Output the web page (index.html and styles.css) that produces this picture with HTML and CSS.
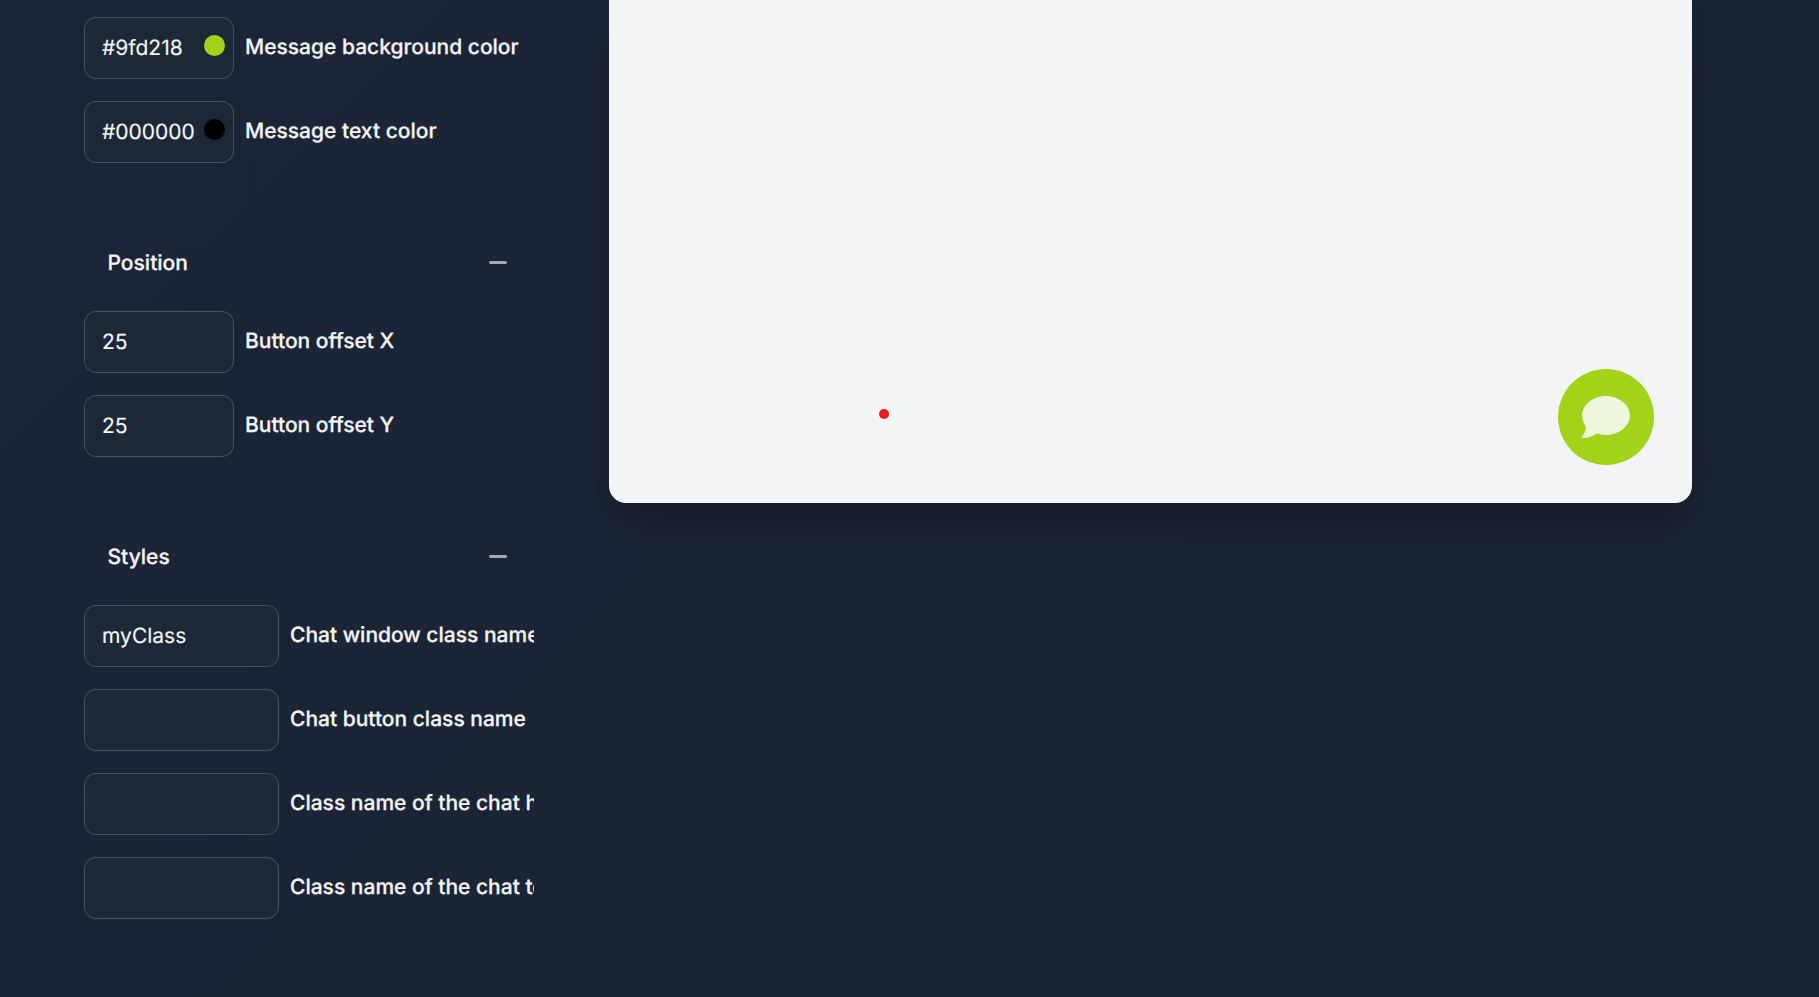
FILE: index.html
```html
<!DOCTYPE html>
<html lang="en">
<head>
<meta charset="utf-8">
<title>Chat widget settings</title>
<link rel="stylesheet" href="styles.css">
</head>
<body>
<div class="page">
  <aside class="sidebar">
    <div class="fields">
      <label class="field">
        <span class="color-box">
          <input class="input input-short" type="text" value="#9fd218">
          <span class="swatch swatch-green"></span>
        </span>
        <span class="label">Message background color</span>
      </label>
      <label class="field">
        <span class="color-box">
          <input class="input input-short" type="text" value="#000000">
          <span class="swatch swatch-black"></span>
        </span>
        <span class="label">Message text color</span>
      </label>
    </div>

    <div class="section-head"><span>Position</span><span class="minus"></span></div>
    <div class="fields">
      <label class="field"><input class="input input-short" type="text" value="25"><span class="label">Button offset X</span></label>
      <label class="field"><input class="input input-short" type="text" value="25"><span class="label">Button offset Y</span></label>
    </div>

    <div class="section-head"><span>Styles</span><span class="minus"></span></div>
    <div class="fields">
      <label class="field"><input class="input input-long" type="text" value="myClass"><span class="label">Chat window class name</span></label>
      <label class="field"><input class="input input-long" type="text" value=""><span class="label">Chat button class name</span></label>
      <label class="field"><input class="input input-long" type="text" value=""><span class="label">Class name of the chat header</span></label>
      <label class="field"><input class="input input-long" type="text" value=""><span class="label">Class name of the chat toggle</span></label>
    </div>
  </aside>

  <main class="preview">
    <span class="dot"></span>
    <button class="chat-button" type="button" aria-label="Open chat">
      <svg class="chat-icon" viewBox="0 0 96 96" width="96" height="96" aria-hidden="true">
        <path d="M48 27C61 27 72 36 72 46.5C72 57 61 66 48 66C45 66 42 65.5 39 64.5C35 67 30 69 25 69C24 69 23.5 68 24.5 67C26.5 64 28 61 28 58C26 55 24 51 24 46.5C24 36 35 27 48 27Z"/>
      </svg>
    </button>
  </main>
</div>
</body>
</html>
```
FILE: styles.css
```css
* { box-sizing: border-box; }

html, body {
  margin: 0;
  height: 100%;
  overflow: hidden;
}

body {
  background: linear-gradient(135deg, #1c2537 0%, #1a2333 100%);
  color: #f3f4f6;
  font-family: Inter, "Liberation Sans", sans-serif;
  text-rendering: geometricPrecision;
}

.page {
  display: flex;
  align-items: flex-start;
  height: 100%;
  padding-left: 84px;
}

.sidebar {
  flex: 0 0 450px;
  width: 450px;
  padding-top: 17px;
}

.fields {
  display: flex;
  flex-direction: column;
  gap: 22px;
}

.field {
  display: flex;
  align-items: center;
  gap: 11px;
  min-width: 0;
}

.color-box {
  position: relative;
  display: block;
  flex: none;
}

.input {
  display: block;
  height: 62px;
  padding: 0 0 0 17px;
  border: 1px solid #465061;
  border-radius: 12px;
  background: #1c2835;
  color: #f3f4f6;
  font: 400 21px Inter, "Liberation Sans", sans-serif;
  text-rendering: geometricPrecision;
  -webkit-text-stroke: 0.15px #f3f4f6;
  outline: none;
  flex: none;
}

.input-short { width: 150px; }
.input-long { width: 195px; }

.swatch {
  position: absolute;
  top: 18px;
  right: 9px;
  width: 21px;
  height: 21px;
  border-radius: 50%;
}

.swatch-green { background: #9fd218; }
.swatch-black { background: #000; }

.label {
  min-width: 0;
  padding-bottom: 1px;
  overflow: hidden;
  white-space: nowrap;
  font-size: 21px;
  font-weight: 500;
  color: #f3f4f6;
  -webkit-text-stroke: 0.25px #f3f4f6;
}

.section-head {
  display: flex;
  align-items: center;
  justify-content: space-between;
  height: 30px;
  margin: 84px 0 34px;
  padding: 2px 27px 0 23.5px;
  font-size: 21px;
  font-weight: 500;
  -webkit-text-stroke: 0.25px #f3f4f6;
}

.minus {
  width: 18px;
  height: 3px;
  margin-top: -2px;
  border-radius: 1.5px;
  background: #a3a8b2;
}

.preview {
  position: relative;
  flex: none;
  width: 1083px;
  height: 503px;
  margin-left: 75px;
  border-radius: 0 0 17px 17px;
  background: #f3f4f6;
  box-shadow: 0 25px 50px -12px rgba(0, 0, 0, .25), 0 8px 20px rgba(0, 0, 0, .04);
}

.dot {
  position: absolute;
  left: 270px;
  top: 409px;
  width: 10px;
  height: 10px;
  border-radius: 50%;
  background: #e91c1c;
}

.chat-button {
  position: absolute;
  right: 38px;
  bottom: 38px;
  width: 96px;
  height: 96px;
  padding: 0;
  border: 0;
  border-radius: 50%;
  background: #a1d318;
}

.chat-icon {
  display: block;
  fill: #eef6dc;
}
```
